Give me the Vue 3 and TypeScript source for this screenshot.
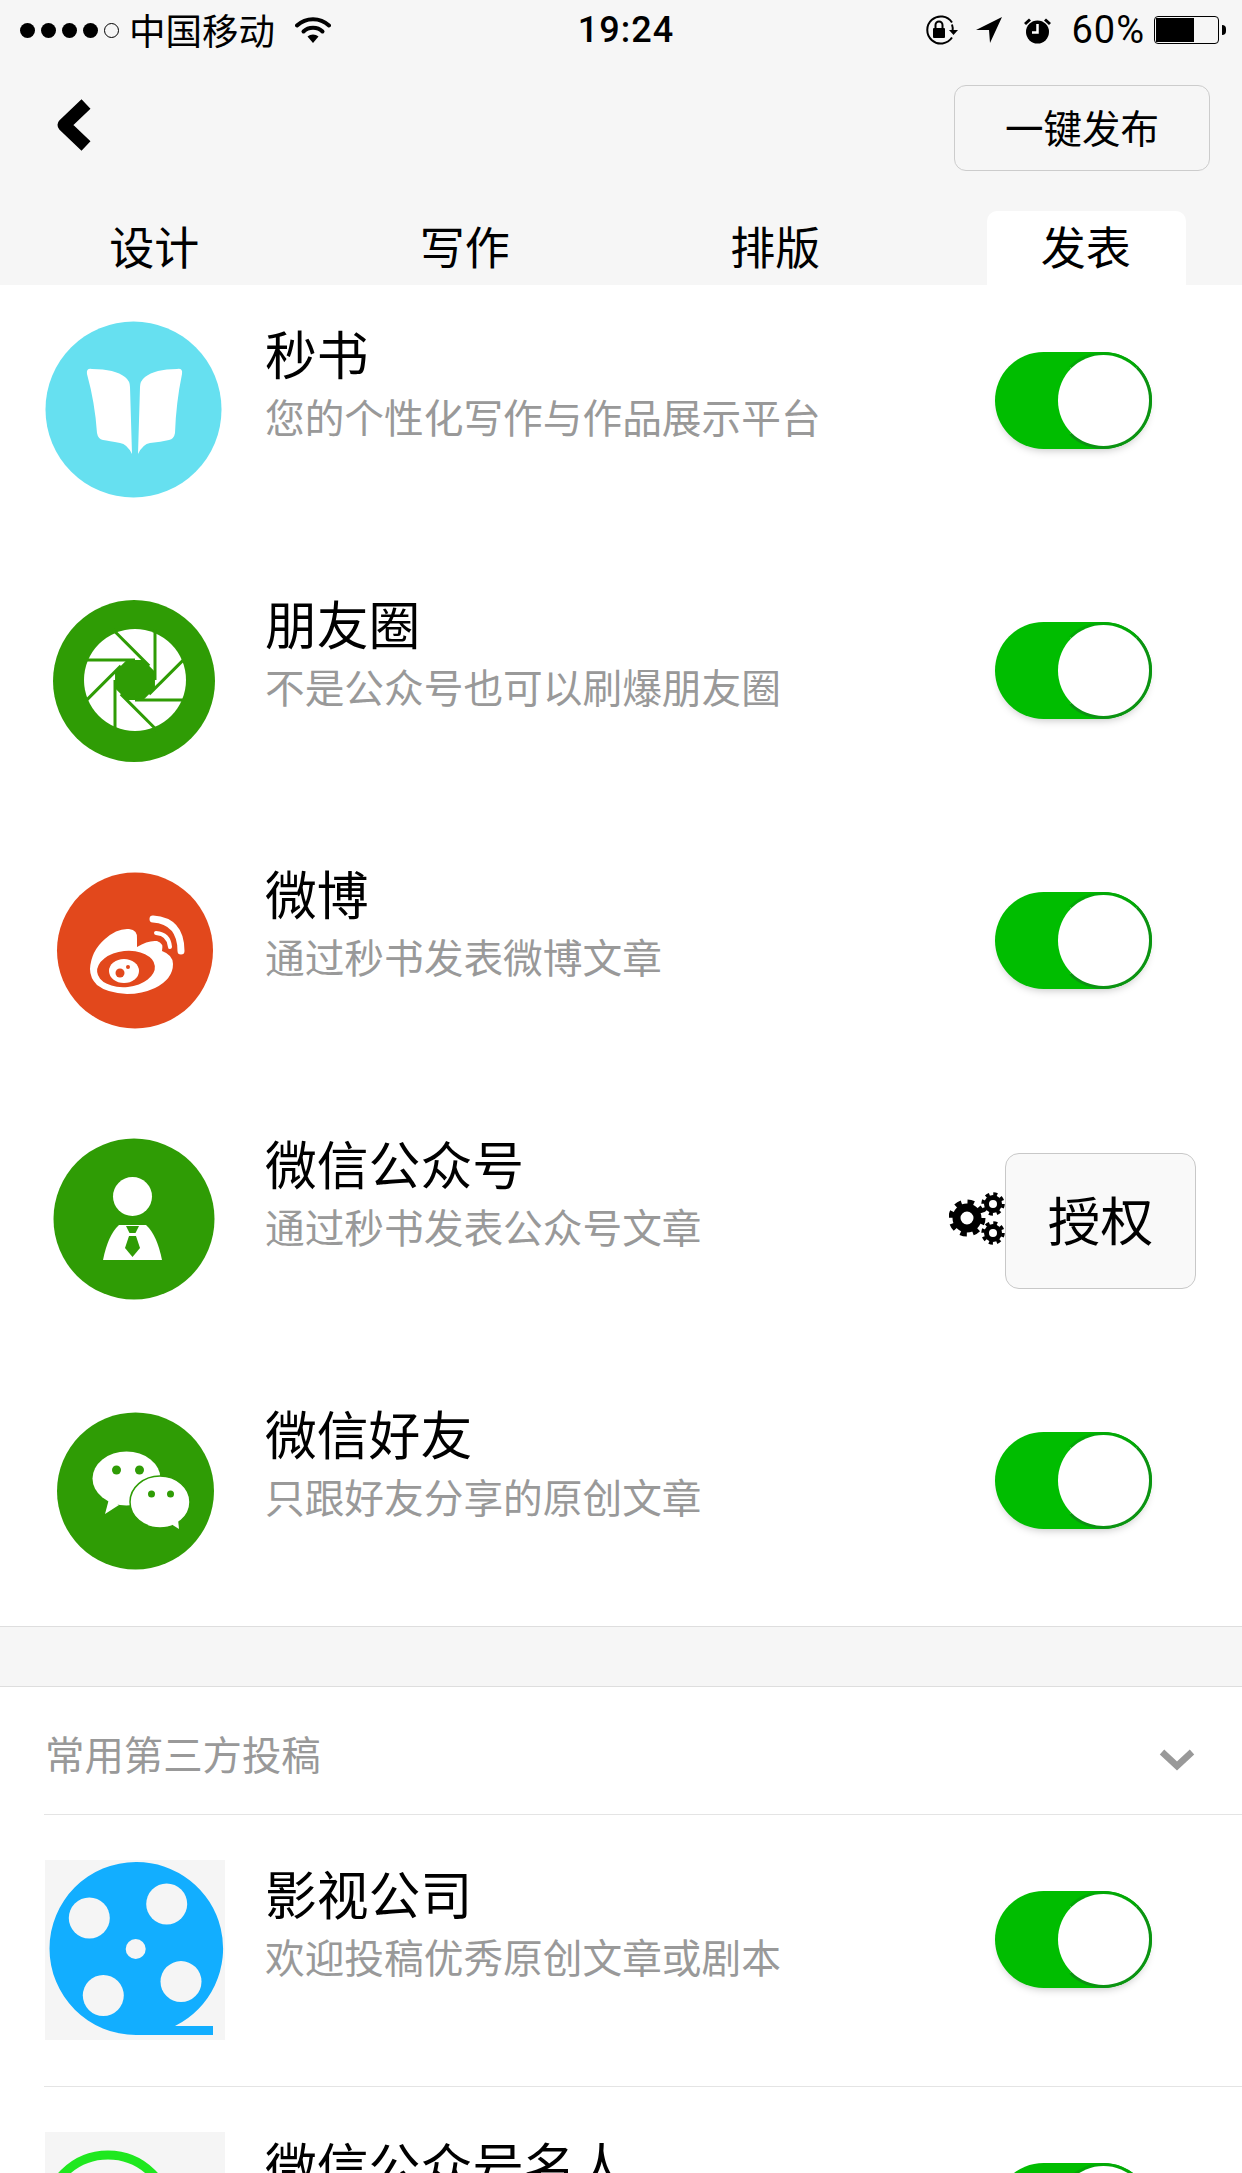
<script setup lang="ts">
interface Row {
  kind: string
  title: string
  sub: string
  auth?: boolean
}

const rows: Row[] = [
  { kind: 'book', title: '秒书', sub: '您的个性化写作与作品展示平台' },
  { kind: 'aperture', title: '朋友圈', sub: '不是公众号也可以刷爆朋友圈' },
  { kind: 'weibo', title: '微博', sub: '通过秒书发表微博文章' },
  { kind: 'official', title: '微信公众号', sub: '通过秒书发表公众号文章', auth: true },
  { kind: 'wechat', title: '微信好友', sub: '只跟好友分享的原创文章' },
]

const thirdRows: Row[] = [
  { kind: 'film', title: '影视公司', sub: '欢迎投稿优秀原创文章或剧本' },
  { kind: 'ring', title: '微信公众号名人', sub: '' },
]

const tabs = ['设计', '写作', '排版', '发表']
const bladeAngles = [0, 45, 90, 135, 180, 225, 270, 315]
const octagon = bladeAngles
  .map((a) => {
    const r = ((a + 22.5) * Math.PI) / 180
    return `${(21.6 * Math.cos(r)).toFixed(2)},${(21.6 * Math.sin(r)).toFixed(2)}`
  })
  .join(' ')
</script>

<template>
  <div class="page" lang="zh-CN">
    <header class="head">
      <div class="status">
        <div class="st-left">
          <span class="dots"><i class="dot"></i><i class="dot"></i><i class="dot"></i><i class="dot"></i><i class="dot off"></i></span>
          <span class="carrier">中国移动</span>
          <svg class="wifi" width="36" height="27" viewBox="0 0 36 27">
            <path d="M2 9.5C11 1 25 1 34 9.5" fill="none" stroke="#000" stroke-width="4" stroke-linecap="round" />
            <path d="M8.5 15.5C13.5 10.5 22.5 10.5 27.5 15.5" fill="none" stroke="#000" stroke-width="4" stroke-linecap="round" />
            <path d="M12.5 20.5C15.5 17.8 20.5 17.8 23.5 20.5L18 27Z" fill="#000" />
          </svg>
        </div>
        <div class="time">19:24</div>
        <div class="st-right">
          <svg class="s-lock" width="36" height="30" viewBox="0 0 36 30">
            <path d="M29 22.5A13.5 13.5 0 1 1 29 7.5" fill="none" stroke="#000" stroke-width="2" />
            <path d="M29 9.5A13.5 13.5 0 0 1 29.5 17" fill="none" stroke="#000" stroke-width="2" />
            <path d="M26 15h9l-4.500 5z" fill="#000" />
            <rect x="10" y="13" width="12" height="10" rx="1" fill="#000" />
            <path d="M12.500 13V10a3.500 3.500 0 0 1 7 0v3" fill="none" stroke="#000" stroke-width="2" />
          </svg>
          <svg class="s-arrow" width="26" height="26" viewBox="0 0 26 26">
            <path d="M0 13L26 0L14 26L13 13Z" fill="#000" />
          </svg>
          <svg class="s-alarm" width="29" height="27" viewBox="0 0 29 27">
            <circle cx="14.500" cy="15" r="11.500" fill="#000" />
            <path d="M1 6L6 1.500L8 3.500L3 8Z M28 6L23 1.500L21 3.500L26 8Z" fill="#000" />
            <path d="M14.500 7V15.500H9" fill="none" stroke="#fff" stroke-width="2.500" />
          </svg>
          <span class="pct">60%</span>
          <span class="battery"><span class="level"></span></span>
          <span class="nub"></span>
        </div>
      </div>
      <div class="nav">
        <svg class="back" width="40" height="56" viewBox="0 0 40 56">
          <path d="M33 7L11 28L33 49" fill="none" stroke="#000" stroke-width="13" stroke-linejoin="round" />
        </svg>
        <div class="publish">一键发布</div>
      </div>
      <nav class="tabs">
        <div v-for="(t, i) in tabs" :key="t" class="tab">
          <span class="tab-label" :class="{ active: i === 3 }">{{ t }}</span>
        </div>
      </nav>
    </header>

    <section class="list">
      <div v-for="r in rows" :key="r.title" class="row">
        <div class="icon">
          <svg v-if="r.kind === 'book'" width="180" height="180" viewBox="0 0 180 180">
            <circle cx="88.500" cy="90.500" r="88" fill="#66e0f0" />
            <path d="M42 55Q41 49 47 50Q70 50 80 58Q85 62 85 68L87 135Q82 125 75 124Q64 122 58 121Q53 120 52 114Q50 84 42 55Z" fill="#fff" />
            <path d="M137 55Q138 49 132 50Q110 50 100 58Q95 62 95 68L93 135Q98 125 105 124Q116 123 124 121Q129 120 130 114Q131 84 137 55Z" fill="#fff" />
          </svg>

          <svg v-else-if="r.kind === 'aperture'" width="180" height="180" viewBox="0 0 180 180">
            <circle cx="89" cy="92" r="81" fill="#2f9c05" />
            <g transform="translate(90 91)">
              <circle r="51" fill="#fff" />
              <polygon :points="octagon" fill="#2f9c05" />
              <line v-for="a in bladeAngles" :key="a" x1="20" y1="-51" x2="20" y2="0" stroke="#2f9c05" stroke-width="3" :transform="`rotate(${a})`" />
            </g>
          </svg>

          <svg v-else-if="r.kind === 'weibo'" width="180" height="180" viewBox="0 0 180 180">
            <circle cx="90" cy="91.500" r="78" fill="#e2481c" />
            <path d="M45 110Q46 92 60 80Q72 69 84 70Q93 71 92 80L92 88Q103 81 112 82Q119 84 117 92Q128 96 128 105Q128 120 110 129Q97 135 82 135Q62 134 52 126Q45 119 45 110Z" fill="#fff" />
            <ellipse cx="81" cy="110" rx="29" ry="18" transform="rotate(-6 81 110)" fill="#e2481c" />
            <ellipse cx="79" cy="112" rx="15" ry="12" fill="#fff" />
            <circle cx="75" cy="114" r="4.500" fill="#e2481c" />
            <circle cx="83" cy="108" r="2" fill="#e2481c" />
            <path d="M108 60Q136 62 136 92" fill="none" stroke="#fff" stroke-width="7" stroke-linecap="round" />
            <path d="M111 74Q124 75 125 88" fill="none" stroke="#fff" stroke-width="4" stroke-linecap="round" />
          </svg>

          <svg v-else-if="r.kind === 'official'" width="180" height="180" viewBox="0 0 180 180">
            <circle cx="89" cy="90" r="80.500" fill="#2f9c05" />
            <circle cx="87.500" cy="67.500" r="19.500" fill="#fff" />
            <path d="M58 131Q63 106 74 96L101 96Q112 106 117 131Z" fill="#fff" />
            <path d="M81 97H94L90.500 104H84.500Z" fill="#2f9c05" />
            <path d="M84 107H91L95 119L87.500 128L80 119Z" fill="#2f9c05" />
          </svg>

          <svg v-else-if="r.kind === 'wechat'" width="180" height="180" viewBox="0 0 180 180">
            <circle cx="90.500" cy="92" r="78.500" fill="#2f9c05" />
            <ellipse cx="81.500" cy="79.500" rx="34" ry="27" fill="#fff" />
            <path d="M64 100L60 115L74 106Z" fill="#fff" />
            <ellipse cx="115" cy="103" rx="30" ry="26" fill="#fff" stroke="#2f9c05" stroke-width="1.500" />
            <path d="M126 125L134 130L133 120Z" fill="#fff" />
            <circle cx="71.500" cy="71" r="4.500" fill="#2f9c05" />
            <circle cx="94.500" cy="71" r="4.500" fill="#2f9c05" />
            <circle cx="106.500" cy="95" r="3.500" fill="#2f9c05" />
            <circle cx="125.500" cy="95" r="3.500" fill="#2f9c05" />
          </svg>
        </div>

        <div class="text">
          <div class="title">{{ r.title }}</div>
          <div class="sub">{{ r.sub }}</div>
        </div>

        <template v-if="r.auth">
          <svg class="gears" width="56" height="56" viewBox="0 0 56 56">
            <g fill="none" stroke="#000">
              <circle cx="18" cy="27" r="10.500" stroke-width="8" />
              <circle cx="18" cy="27" r="16" stroke-width="5" stroke-dasharray="6.500 6.070" />
              <circle cx="44" cy="13" r="6.500" stroke-width="5" />
              <circle cx="44" cy="13" r="10" stroke-width="3.500" stroke-dasharray="4 3.850" />
              <circle cx="44" cy="42" r="6.500" stroke-width="5" />
              <circle cx="44" cy="42" r="10" stroke-width="3.500" stroke-dasharray="4 3.850" />
            </g>
          </svg>
          <div class="auth">授权</div>
        </template>
        <div v-else class="toggle"><span class="thumb"></span></div>
      </div>
    </section>

    <div class="gap"></div>

    <section class="third">
      <div class="third-head">
        <span class="third-label">常用第三方投稿</span>
        <svg class="chev" width="36" height="24" viewBox="0 0 36 24">
          <path d="M3 4L18 18L33 4" fill="none" stroke="#999" stroke-width="6.500" />
        </svg>
      </div>
      <div v-for="r in thirdRows" :key="r.title" class="row third-row">
        <div class="icon grey">
          <svg v-if="r.kind === 'film'" width="180" height="180" viewBox="0 0 180 180">
            <path d="M91 2A86.500 86.500 0 0 1 130 166L168 166V175H91A86.500 86.500 0 0 1 91 2Z" fill="#12aeff" />
            <g fill="#f5f5f5">
              <ellipse cx="44.300" cy="58" rx="20.500" ry="20.500" />
              <ellipse cx="121.700" cy="44" rx="20.500" ry="20.500" />
              <ellipse cx="136" cy="121.600" rx="20.500" ry="20.500" />
              <ellipse cx="58.300" cy="135.500" rx="20.500" ry="20.500" />
              <circle cx="90.700" cy="89" r="10" />
            </g>
          </svg>
          <svg v-else width="180" height="180" viewBox="0 0 180 180">
            <circle cx="63" cy="85" r="62" fill="none" stroke="#1fe81f" stroke-width="9" />
          </svg>
        </div>
        <div class="text">
          <div class="title">{{ r.title }}</div>
          <div class="sub">{{ r.sub }}</div>
        </div>
        <div class="toggle"><span class="thumb"></span></div>
      </div>
    </section>
  </div>
</template>

<style>
html,
body {
  margin: 0;
  background: #fff;
}
</style>

<style scoped>
.page {
  width: 1242px;
  height: 2173px;
  overflow: hidden;
  background: #fff;
  color: #000;
  font-family: "Noto Sans CJK SC", "Noto Sans", sans-serif;
  font-weight: 400;
}

.head {
  height: 285px;
  background: #f6f6f6;
  display: flex;
  flex-direction: column;
}

.status {
  height: 60px;
  display: grid;
  grid-template-columns: 1fr auto 1fr;
  align-items: center;
  padding: 0 16px 0 20px;
  box-sizing: border-box;
}

.st-left,
.st-right {
  display: flex;
  align-items: center;
}

.st-right {
  justify-content: flex-end;
}

.dots {
  display: flex;
  gap: 6px;
}

.dot {
  width: 15px;
  height: 15px;
  border-radius: 50%;
  background: #000;
  display: block;
}

.dot.off {
  background: transparent;
  border: 1.5px solid #000;
  box-sizing: border-box;
}

.carrier {
  font-size: 36.5px;
  line-height: 58px;
  margin-left: 10px;
  width: 148px;
}

.wifi {
  margin-left: 18px;
  margin-top: -1px;
}

.time {
  font-family: Roboto, "Liberation Sans", sans-serif;
  font-weight: 500;
  font-size: 36px;
  line-height: 60px;
  letter-spacing: 1px;
  padding-left: 6px;
}

.s-arrow {
  margin-left: 17px;
}

.s-alarm {
  margin-left: 21px;
}

.pct {
  font-family: Roboto, "Liberation Sans", sans-serif;
  font-weight: 400;
  font-size: 38px;
  letter-spacing: 1px;
  line-height: 60px;
  margin-left: 19px;
}

.battery {
  width: 65px;
  height: 28px;
  border: 1.5px solid #000;
  border-radius: 4px;
  box-sizing: border-box;
  padding: 1px;
  margin-left: 9px;
  display: block;
}

.level {
  display: block;
  width: 38px;
  height: 100%;
  background: #000;
}

.nub {
  width: 4px;
  height: 10px;
  margin-left: 3px;
  background: #000;
  border-radius: 0 5px 5px 0;
}

.nav {
  height: 151px;
  display: flex;
  justify-content: space-between;
  align-items: flex-start;
  padding: 0 32px 0 53px;
  box-sizing: border-box;
}

.back {
  margin-top: 37px;
}

.publish {
  width: 256px;
  height: 86px;
  margin-top: 25px;
  box-sizing: border-box;
  border: 1.5px solid #ccc;
  border-radius: 12px;
  font-size: 38.5px;
  line-height: 81px;
  text-align: center;
}

.tabs {
  height: 74px;
  display: flex;
}

.tab {
  flex: 1;
  display: flex;
  justify-content: center;
}

.tab-label {
  width: 199px;
  font-size: 45px;
  line-height: 69px;
  padding-right: 2px;
  box-sizing: border-box;
  text-align: center;
  border-radius: 10px 10px 0 0;
}

.tab-label.active {
  background: #fff;
}

.row {
  height: 270px;
  padding: 34px 0 0 45px;
  box-sizing: border-box;
  display: flex;
  align-items: flex-start;
}

.list .row:last-child {
  height: 261px;
}

.icon {
  width: 180px;
  height: 180px;
  flex: none;
}

.icon svg {
  display: block;
  overflow: visible;
}

.grey {
  background: #f5f5f5;
}

.text {
  flex: 1;
  min-width: 0;
  margin: 4px 0 0 40px;
}

.title {
  font-size: 51.8px;
  line-height: 60px;
  white-space: nowrap;
}

.sub {
  font-size: 39.7px;
  line-height: 50px;
  margin-top: 8px;
  color: #999;
  white-space: nowrap;
}

.toggle {
  width: 157px;
  height: 97px;
  margin: 33px 90px 0 0;
  flex: none;
  background: #00bd00;
  border-radius: 49px;
  display: flex;
  justify-content: flex-end;
  box-shadow: 0 5px 8px -4px rgba(0, 0, 0, 0.25);
}

.thumb {
  width: 97px;
  height: 97px;
  box-sizing: border-box;
  border: 3px solid #0b9312;
  border-left-color: #00bd00;
  border-top-color: #02a806;
  border-radius: 50%;
  background: #fff;
  display: block;
}

.gears {
  flex: none;
  margin-top: 62px;
}

.auth {
  width: 191px;
  height: 136px;
  margin: 24px 46px 0 0;
  flex: none;
  box-sizing: border-box;
  border: 1.5px solid #c8c8c8;
  border-radius: 14px;
  background: #f9f9f9;
  font-size: 52.7px;
  line-height: 128px;
  text-align: center;
}

.gap {
  height: 61px;
  box-sizing: border-box;
  background: #f6f6f6;
  border-top: 1.5px solid #dedede;
  border-bottom: 1.5px solid #dedede;
}

.third-head {
  height: 128px;
  margin-left: 44px;
  padding: 0 47px 0 1px;
  box-sizing: border-box;
  display: flex;
  justify-content: space-between;
  align-items: center;
  font-size: 39.4px;
  color: #999;
  border-bottom: 1.5px solid #e4e4e4;
}

.third-label {
  margin-top: 3px;
}

.chev {
  margin-top: 18px;
}

.third-row {
  height: 272px;
  padding-top: 45px;
  position: relative;
}

.third-row .text {
  margin-top: 3px;
}

.third-row .toggle {
  margin-top: 31px;
}

.third-row::after {
  content: "";
  position: absolute;
  left: 44px;
  right: 0;
  bottom: 0;
  height: 1.5px;
  background: #e4e4e4;
}
</style>
